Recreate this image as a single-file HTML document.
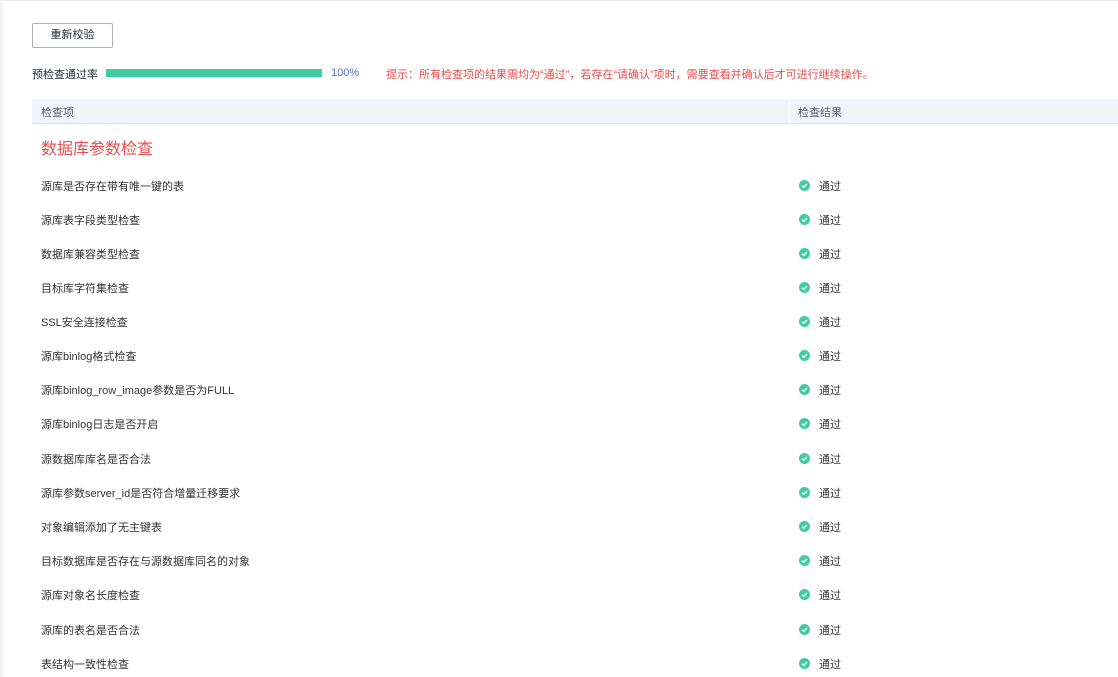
<!DOCTYPE html>
<html><head><meta charset="utf-8"><style>
body{margin:0;width:1118px;height:677px;overflow:hidden;background:#fff;font-family:"Liberation Sans","Noto Sans CJK SC",sans-serif;font-size:11px;color:#333;position:relative}
.lb{position:absolute;left:0;top:0;width:3px;height:677px;background:#f0f2f6}
.tb{position:absolute;left:0;top:0;width:1118px;height:1px;background:#e8eaf0}
.btn{position:absolute;left:32px;top:23px;width:79px;height:23px;border:1px solid #adb0b8;border-radius:2px;text-align:center;line-height:23px;font-size:11px;color:#252b3a}
.a{position:absolute;white-space:nowrap}
.bar{position:absolute;left:106px;top:69px;width:216px;height:8px;background:#3fcca5}
.hd{position:absolute;left:32px;top:99px;width:1086px;height:24px;background:#f1f4fb;border-bottom:1px solid #dfe1e8}
.sep{position:absolute;left:789px;top:99px;width:1px;height:24px;background:#fff}
.ic{position:absolute;left:799px;width:11px;height:11px;border-radius:50%;background:#3fcca5}
.ic svg{position:absolute;left:0;top:0}
</style></head><body>
<div class="tb"></div><div class="lb"></div>
<div class="btn">重新校验</div>
<div class="a" style="left:32px;top:66px;color:#252b3a">预检查通过率</div>
<div class="bar"></div>
<div class="a" style="left:331px;top:67px;color:#526ecc">100%</div>
<div class="a" style="left:386px;top:66px;color:#e84e4e">提示：所有检查项的结果需均为“通过”，若存在“请确认”项时，需要查看并确认后才可进行继续操作。</div>
<div class="hd"></div><div class="sep"></div>
<div class="a" style="left:41px;top:104px;color:#575d6c">检查项</div>
<div class="a" style="left:798px;top:104px;color:#575d6c">检查结果</div>
<div class="a" style="left:41px;top:135px;color:#e84e4e;font-size:16px">数据库参数检查</div>
<div id="rows"></div>
<div class="a" style="left:41px;top:178px">源库是否存在带有唯一键的表</div>
<div class="a" style="left:41px;top:212px">源库表字段类型检查</div>
<div class="a" style="left:41px;top:246px">数据库兼容类型检查</div>
<div class="a" style="left:41px;top:280px">目标库字符集检查</div>
<div class="a" style="left:41px;top:314px">SSL安全连接检查</div>
<div class="a" style="left:41px;top:348px">源库binlog格式检查</div>
<div class="a" style="left:41px;top:382px">源库binlog_row_image参数是否为FULL</div>
<div class="a" style="left:41px;top:416px">源库binlog日志是否开启</div>
<div class="a" style="left:41px;top:451px">源数据库库名是否合法</div>
<div class="a" style="left:41px;top:485px">源库参数server_id是否符合增量迁移要求</div>
<div class="a" style="left:41px;top:519px">对象编辑添加了无主键表</div>
<div class="a" style="left:41px;top:553px">目标数据库是否存在与源数据库同名的对象</div>
<div class="a" style="left:41px;top:587px">源库对象名长度检查</div>
<div class="a" style="left:41px;top:622px">源库的表名是否合法</div>
<div class="a" style="left:41px;top:656px">表结构一致性检查</div>
<script>
var ys=[185,219,253,287,321,355,389,423,458,492,526,560,594,629,663],h='';
ys.forEach(function(y){h+='<div class="ic" style="top:'+(y-5)+'px"><svg width="11" height="11"><path d="M3 5.7L4.8 7.3 8 4" stroke="#fff" stroke-width="1.4" fill="none"/></svg></div><div class="a" style="left:819px;top:'+(y-7)+'px">通过</div>';});
document.getElementById('rows').innerHTML=h;
</script>
</body></html>
